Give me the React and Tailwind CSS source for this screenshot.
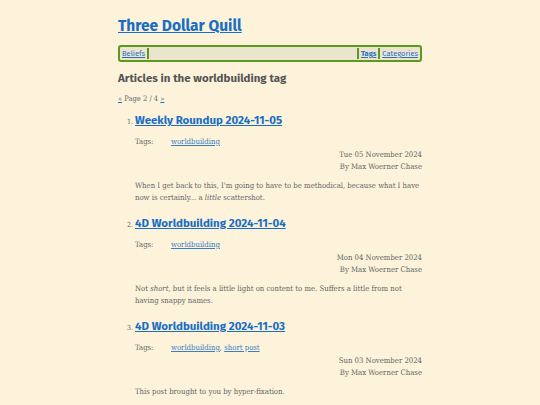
const posts = [
  {
    title: 'Weekly Roundup 2024-11-05',
    tags: ['worldbuilding'],
    date: 'Tue 05 November 2024',
    body: (
      <>
        When I get back to this, I'm going to have to be methodical, because what I have now is certainly... a{' '}
        <em>little</em> scattershot.
      </>
    ),
  },
  {
    title: '4D Worldbuilding 2024-11-04',
    tags: ['worldbuilding'],
    date: 'Mon 04 November 2024',
    body: (
      <>
        Not <em>short</em>, but it feels a little light on content to me. Suffers a little from not having snappy names.
      </>
    ),
  },
  {
    title: '4D Worldbuilding 2024-11-03',
    tags: ['worldbuilding', 'short post'],
    date: 'Sun 03 November 2024',
    body: <>This post brought to you by hyper-fixation.</>,
  },
]

const sans = "font-['Fira_Sans','Open_Sans',sans-serif]"
const serif = "font-['Roboto_Slab','DejaVu_Serif_Condensed','DejaVu_Serif',serif] [font-stretch:semi-condensed]"

function Sep() {
  return <span className="w-[2px] h-[11px] bg-[#5b9a1c] mx-[2px]" />
}

export default function App() {
  return (
    <div className="min-h-screen bg-[#fcf3da] text-[#666]">
      <div className="w-[304px] mx-auto pt-[16px]">
        <h1 className={`${sans} text-[15.5px] font-bold leading-[20px]`}>
          <a href="#" className="text-[#1a6dc4] underline">Three Dollar Quill</a>
        </h1>

        <nav className={`${sans} mt-[9px] h-[17px] border-2 border-[#5b9a1c] rounded-[3px] bg-[#ebe4cf] flex items-center px-[2px] text-[7.5px]`}>
          <a href="#" className="text-[#2a72bf] underline">Beliefs</a>
          <Sep />
          <div className="flex-1" />
          <Sep />
          <a href="#" className="text-[#2a72bf] underline font-bold">Tags</a>
          <Sep />
          <a href="#" className="text-[#2a72bf] underline">Categories</a>
        </nav>

        <h2 className={`${sans} mt-[8px] text-[11.5px] font-bold text-[#555] leading-[16px]`}>
          Articles in the worldbuilding tag
        </h2>

        <p className={`${serif} mt-[8px] text-[7.5px] leading-[10px] text-[#666]`}>
          <a href="#" className="text-[#2a72bf] underline">«</a> Page 2 / 4{' '}
          <a href="#" className="text-[#2a72bf] underline">»</a>
        </p>

        <ol className="mt-[9px] pl-[17px]">
          {posts.map((p, i) => (
            <li key={i} className="mb-[12px]">
              <div className="flex items-baseline">
                <span className={`${serif} text-[7px] w-[7px] -ml-[9px] mr-[2px] text-right`}>{i + 1}.</span>
                <a href="#" className={`${sans} text-[11.5px] font-bold text-[#1a6dc4] underline leading-[15px]`}>
                  {p.title}
                </a>
              </div>
              <div className={`${serif} text-[7.7px] leading-[12px]`}>
                <div className="mt-[8px] flex">
                  <span className="w-[36px]">Tags:</span>
                  <span>
                    {p.tags.map((t, j) => (
                      <span key={t}>
                        {j > 0 && ', '}
                        <a href="#" className="text-[#3a7ec4] underline">{t}</a>
                      </span>
                    ))}
                  </span>
                </div>
                <div className="text-right mt-[1px]">{p.date}</div>
                <div className="text-right">By Max Woerner Chase</div>
                <p className="mt-[7px]">{p.body}</p>
              </div>
            </li>
          ))}
        </ol>
      </div>
    </div>
  )
}
